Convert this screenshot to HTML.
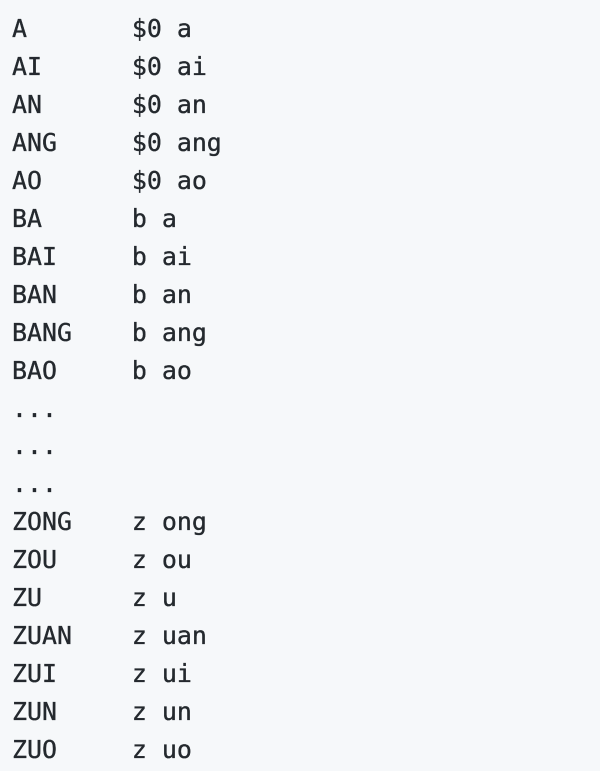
<!DOCTYPE html>
<html><head><style>
html,body{margin:0;padding:0;background:#f6f8fa;}
pre{margin:0;padding:10px 0 0 12px;font-family:"DejaVu Sans Mono","Liberation Mono",monospace;font-size:24.9px;line-height:37.95px;color:#24292e;-webkit-text-stroke:0.35px #24292e;width:600px;height:771px;box-sizing:border-box;overflow:hidden;}
</style></head><body><pre>A       $0 a
AI      $0 ai
AN      $0 an
ANG     $0 ang
AO      $0 ao
BA      b a
BAI     b ai
BAN     b an
BANG    b ang
BAO     b ao
...
...
...
ZONG    z ong
ZOU     z ou
ZU      z u
ZUAN    z uan
ZUI     z ui
ZUN     z un
ZUO     z uo</pre></body></html>
